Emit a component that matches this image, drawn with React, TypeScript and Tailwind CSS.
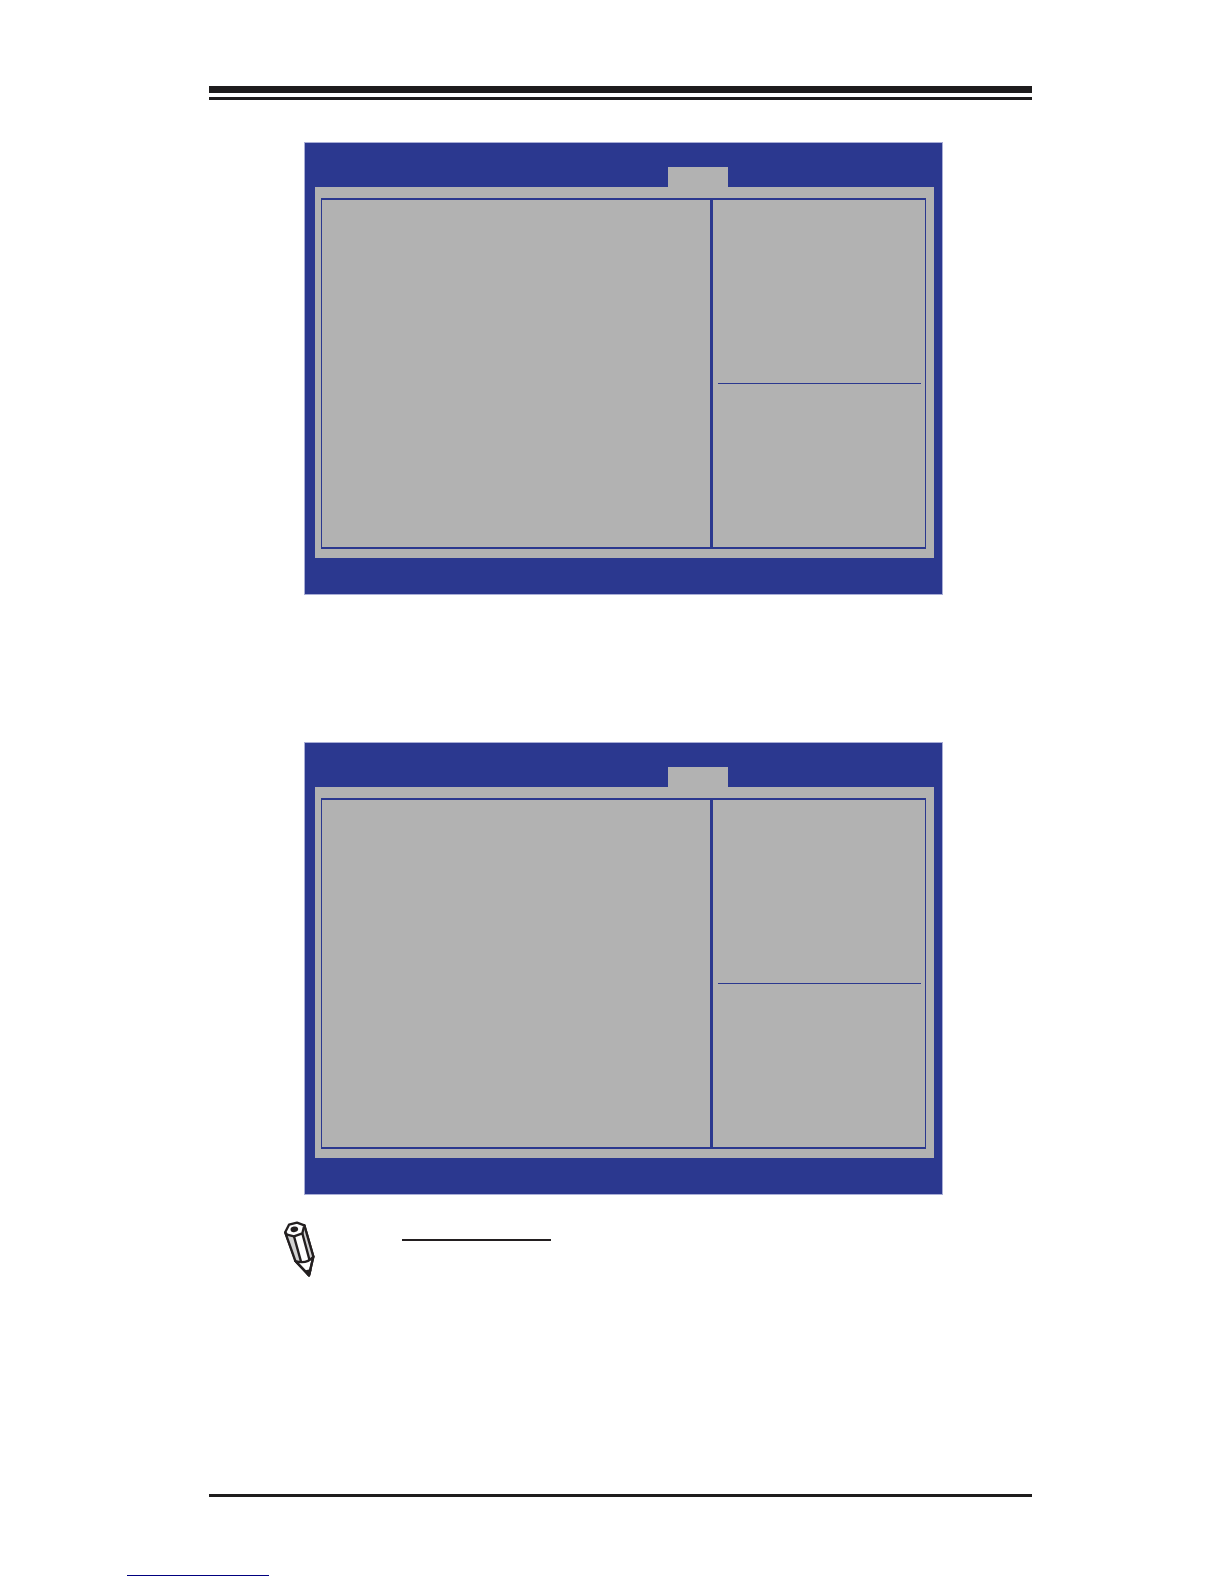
function PencilIcon() {
  return (
    <svg
      width="36"
      height="60"
      viewBox="-3 0 108 180"
      className="shrink-0"
      fill="none"
      stroke="#231f20"
      strokeWidth="7"
      strokeLinejoin="round"
      strokeLinecap="round"
      aria-hidden="true"
    >
      <path d="M7 41 L39 128 L78 169 L91 113 L64 19 Z" fill="#fff" />
      <path d="M7 41 L33 52 L55 129 L38 126 Z" fill="#d1d1d1" stroke="none" />
      <path d="M58 43 L64 20 L91 113 L80 122 Z" fill="#d1d1d1" stroke="none" />
      <path d="M7 41 L37 126 L78 169 L91 113 L64 19" />
      <path d="M33 52 L54 128 M58 43 L79 121" />
      <path d="M37 126 Q70 137 91 113" />
      <path d="M7 39 L18 17 L42 11 L64 19 L58 43 L33 52 L12 47 Z" fill="#fff" />
      <ellipse cx="34" cy="31" rx="9" ry="6" transform="rotate(-12 34 31)" fill="#231f20" strokeWidth="5" />
      <path d="M69 157 L82 154 L78 169 Z" fill="#231f20" />
    </svg>
  );
}

function SetupScreen() {
  return (
    <section className="mr-[89px] ml-[95px] border border-[#a9aed6] bg-[#2b388f] px-2 pt-6 pb-9">
      <div className="ml-[355px] h-5 w-[60px] bg-[#b2b2b2]" />
      <div className="ml-0.5 bg-[#b2b2b2] pt-[11px] pr-2 pb-[9px] pl-1.5">
        <div className="flex h-[351px] border-x border-y-2 border-[#2b388f]">
          <div className="flex-1" />
          <div className="w-[215px] border-l-3 border-[#2b388f] pr-1 pl-[5px]">
            <div className="h-[184px] border-b border-[#2b388f]" />
          </div>
        </div>
      </div>
    </section>
  );
}

export default function App() {
  return (
    <div className="min-h-screen bg-white pt-[86px]">
      <main className="mr-[192px] ml-[209px]">
        <header className="mb-[42px] h-3.5 border-t-7 border-b-3 border-[#1e1c1d]" />

        <div className="flex flex-col gap-[147px]">
          <SetupScreen />
          <SetupScreen />
        </div>

        <div className="mt-6 ml-[73px] flex h-[275px] items-start">
          <PencilIcon />
          <div className="mt-5 ml-[84px] h-0.5 w-[149px] bg-[#231f20]" />
        </div>

        <div className="h-[3px] bg-[#1e1c1d]" />
      </main>
      <footer className="mt-[78px] ml-[127px] h-px w-[142px] bg-[#00007f]" />
    </div>
  );
}
